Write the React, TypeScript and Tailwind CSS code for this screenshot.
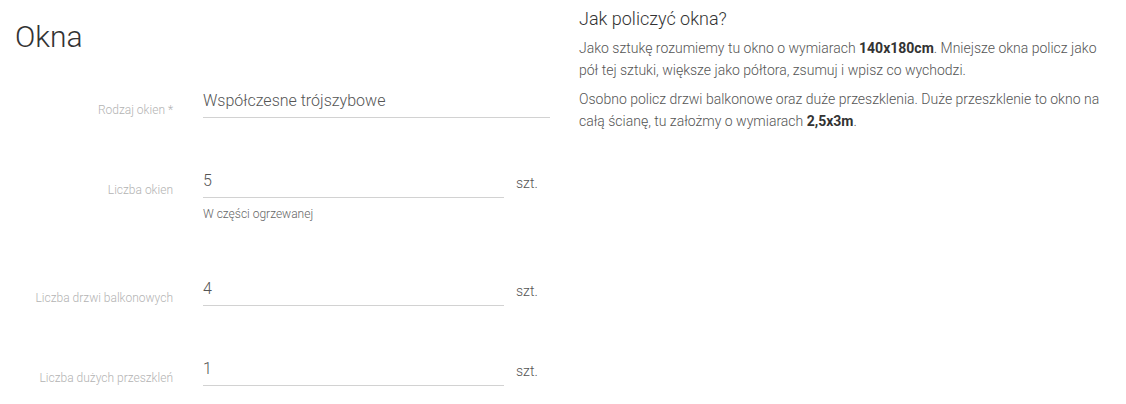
import React from "react";

function Row({
  label,
  value,
  width,
  unit,
  helper,
}: {
  label: string;
  value: string;
  width: string;
  unit?: string;
  helper?: string;
}) {
  return (
    <div className="flex items-start mb-[46px]">
      <div className="w-[158px] pt-[18px] text-right text-[12px] leading-[16px] text-[#b3b3b3] font-light">
        {label}
      </div>
      <div className="ml-[30px] flex items-start">
        <div className={width}>
          <div className="h-[34px] border-b border-[#d2d2d2] flex items-center text-[16px] text-[#555] font-light">
            {value}
          </div>
          {helper && (
            <div className="mt-[8px] mb-[4px] text-[12px] leading-[16px] text-[#666] font-light">
              {helper}
            </div>
          )}
        </div>
        {unit && (
          <div className="pl-[12px] pt-[9px] text-[14px] leading-[20px] text-[#555] font-light">
            {unit}
          </div>
        )}
      </div>
    </div>
  );
}

export default function App() {
  return (
    <div className="w-[1126px] h-[404px] bg-white flex font-['Roboto',sans-serif] overflow-hidden">
      <div className="w-[564px] pl-[15px]">
        <h1 className="mt-[22px] mb-[32px] text-[30px] leading-[30px] h-[30px] font-light text-[#333]">
          Okna
        </h1>
        <Row label="Rodzaj okien *" value="Współczesne trójszybowe" width="w-[347px]" />
        <Row
          label="Liczba okien"
          value="5"
          width="w-[301px]"
          unit="szt."
          helper="W części ogrzewanej"
        />
        <Row label="Liczba drzwi balkonowych" value="4" width="w-[301px]" unit="szt." />
        <Row label="Liczba dużych przeszkleń" value="1" width="w-[301px]" unit="szt." />
      </div>
      <div className="pl-[15px] w-[548px]">
        <h2 className="mt-[8px] mb-[7px] text-[18px] leading-[22px] font-light text-[#333]">
          Jak policzyć okna?
        </h2>
        <p className="mb-[7px] text-[14px] leading-[22px] font-light text-[#555]">
          Jako sztukę rozumiemy tu okno o wymiarach{" "}
          <b className="font-bold text-[#333]">140x180cm</b>. Mniejsze okna policz jako pół tej
          sztuki, większe jako półtora, zsumuj i wpisz co wychodzi.
        </p>
        <p className="text-[14px] leading-[22px] font-light text-[#555]">
          Osobno policz drzwi balkonowe oraz duże przeszklenia. Duże przeszklenie to okno na całą
          ścianę, tu założmy o wymiarach <b className="font-bold text-[#333]">2,5x3m</b>.
        </p>
      </div>
    </div>
  );
}
